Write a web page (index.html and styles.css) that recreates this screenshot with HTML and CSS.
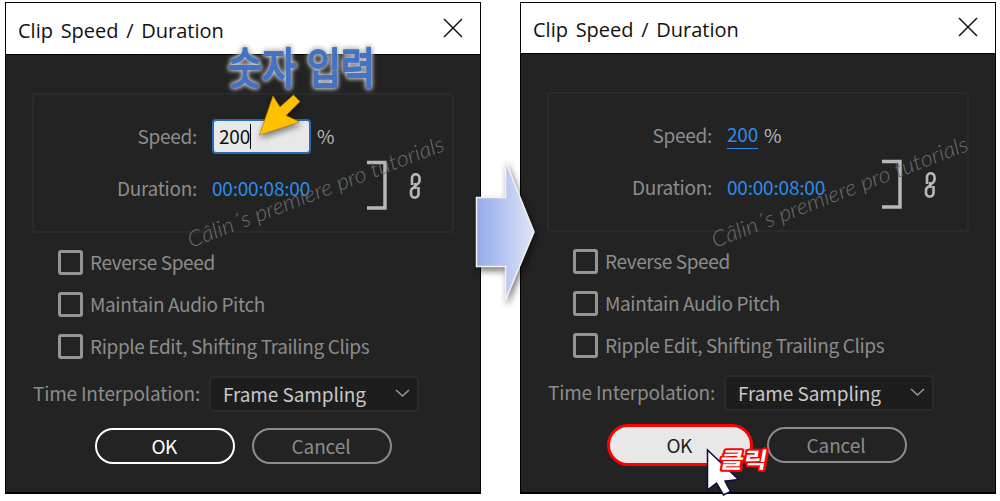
FILE: index.html
```
<!DOCTYPE html>
<html lang="en">
<head>
    <meta charset="UTF-8">
    <title>Clip Speed / Duration</title>
    <link rel="stylesheet" href="styles.css">
</head>
<body>
    <div class="stage">
        <div class="dialog">
            <div class="title-bar">
                <span class="title">Clip Speed / Duration</span>
                <svg class="close" width="20" height="20" viewBox="0 0 20 20"><path d="M1 1L19 19M19 1L1 19"/></svg>
            </div>
            <div class="group">
                <div class="fields">
                    <div class="row">
                        <span class="label">Speed:</span>
                        <span class="input">200<i class="caret"></i></span>
                        <span class="percent">%</span>
                    </div>
                    <div class="row">
                        <span class="label">Duration:</span>
                        <span class="value">00:00:08:00</span>
                    </div>
                </div>
                <svg class="link" width="56" height="52" viewBox="0 0 56 52">
                    <path class="bracket" d="M0 2.500H18V48H0"/>
                    <path class="chain" d="M45 25V18a3.750 3.750 0 0 1 7.500 0V21Q52.500 23 50.500 24L48.500 25.500V29"/>
                    <path class="chain" d="M51.500 27V34a3.750 3.750 0 0 1-7.500 0V31Q44 29 46 28L48 26.500V23"/>
                </svg>
            </div>
            <div class="checks">
                <div class="check"><span class="box"></span><span>Reverse Speed</span></div>
                <div class="check"><span class="box"></span><span>Maintain Audio Pitch</span></div>
                <div class="check"><span class="box"></span><span>Ripple Edit, Shifting Trailing Clips</span></div>
            </div>
            <div class="interpolation">
                <span class="label">Time Interpolation:</span>
                <div class="select">
                    <span>Frame Sampling</span>
                    <svg width="15" height="8" viewBox="0 0 15 8"><path d="M1 1L7.500 7L14 1"/></svg>
                </div>
            </div>
            <div class="buttons">
                <div class="btn ok">OK</div>
                <div class="btn">Cancel</div>
            </div>
        </div>

        <div class="dialog second">
            <div class="title-bar">
                <span class="title">Clip Speed / Duration</span>
                <svg class="close" width="20" height="20" viewBox="0 0 20 20"><path d="M1 1L19 19M19 1L1 19"/></svg>
            </div>
            <div class="group">
                <div class="fields">
                    <div class="row">
                        <span class="label">Speed:</span>
                        <span class="value underlined">200</span>
                        <span class="percent">%</span>
                    </div>
                    <div class="row">
                        <span class="label">Duration:</span>
                        <span class="value">00:00:08:00</span>
                    </div>
                </div>
                <svg class="link" width="56" height="52" viewBox="0 0 56 52">
                    <path class="bracket" d="M0 2.500H18V48H0"/>
                    <path class="chain" d="M45 25V18a3.750 3.750 0 0 1 7.500 0V21Q52.500 23 50.500 24L48.500 25.500V29"/>
                    <path class="chain" d="M51.500 27V34a3.750 3.750 0 0 1-7.500 0V31Q44 29 46 28L48 26.500V23"/>
                </svg>
            </div>
            <div class="checks">
                <div class="check"><span class="box"></span><span>Reverse Speed</span></div>
                <div class="check"><span class="box"></span><span>Maintain Audio Pitch</span></div>
                <div class="check"><span class="box"></span><span>Ripple Edit, Shifting Trailing Clips</span></div>
            </div>
            <div class="interpolation">
                <span class="label">Time Interpolation:</span>
                <div class="select">
                    <span>Frame Sampling</span>
                    <svg width="15" height="8" viewBox="0 0 15 8"><path d="M1 1L7.500 7L14 1"/></svg>
                </div>
            </div>
            <div class="buttons">
                <div class="btn ok pressed">OK</div>
                <div class="btn">Cancel</div>
            </div>
        </div>

        <!-- tutorial marks on top of both dialogs -->
        <svg class="marks" width="1000" height="501" viewBox="0 0 1000 501">
            <defs>
                <linearGradient id="blue" x1="0" x2="1">
                    <stop offset="0" stop-color="#93aaec"/>
                    <stop offset="1" stop-color="#dfe5f7"/>
                </linearGradient>
            </defs>
            <text class="watermark" transform="translate(191 248) rotate(-21)" textLength="273" lengthAdjust="spacingAndGlyphs">Câlin´s premiere pro tutorials</text>
            <text class="watermark" transform="translate(715 248) rotate(-21)" textLength="273" lengthAdjust="spacingAndGlyphs">Câlin´s premiere pro tutorials</text>
            <path class="next" d="M476.500 197.500H505.500V161L534 232L505.500 300V266.500H476.500Z"/>
            <text class="note" lang="ko" x="228" y="84" textLength="147" lengthAdjust="spacingAndGlyphs">숫자 입력</text>
            <path class="pointer" d="M259.500 135L273 96L280 107L293.500 95L300 101.500L286 115.500L299.500 122Z"/>
            <path class="cursor" d="M707.500 450V490L716.500 483L723.500 495L730.500 491.500L725 481L738.500 479.500Z"/>
            <text class="click" lang="ko" transform="translate(719 468) skewX(-10)" textLength="47" lengthAdjust="spacingAndGlyphs">클릭</text>
        </svg>
    </div>
</body>
</html>
```
FILE: styles.css
```
* {
    box-sizing: border-box;
}
body {
    margin: 0;
    background: #fff;
    font-family: "Noto Sans CJK KR", sans-serif;
    font-size: 19px;
    line-height: 24px;
    letter-spacing: -0.38px;
    color: #8c8c8c;
    overflow: hidden;
}
.stage {
    position: relative;
    display: flex;
    gap: 39px;
    width: 1000px;
    height: 501px;
    padding: 2px 0 0 5px;
    white-space: nowrap;
}
.dialog {
    width: 476px;
    height: 492px;
    background: #232323;
    border: 1px solid #000;
    border-bottom-width: 2px;
}
.title-bar {
    display: flex;
    justify-content: space-between;
    height: 52px;
    padding: 15px 17px 0 12px;
    background: #fff;
    border-bottom: 1px solid #000;
    color: #111;
}
.title {
    font-family: "Open Sans", sans-serif;
    font-size: 20px;
    line-height: 26px;
    letter-spacing: 0;
    word-spacing: 2.500px;
}
.close {
    fill: none;
    stroke: #111;
    stroke-width: 1.5;
}
.group {
    display: flex;
    width: 422px;
    height: 140px;
    margin: 38px 0 0 26px;
    border: 2px solid #2b2b2b;
    border-radius: 4px;
}
.fields {
    display: flex;
    flex-direction: column;
    gap: 17px;
    width: 333px;
    padding-top: 24px;
}
.row {
    display: flex;
    align-items: center;
    height: 35px;
}
.label {
    width: 163px;
    margin-right: 15px;
    padding-bottom: 2px;
    text-align: right;
    letter-spacing: -0.3px;
}
.input {
    display: flex;
    align-items: center;
    width: 99px;
    height: 35px;
    padding: 0 0 1px 5px;
    background: #e8e8e8;
    border: 2px solid #2a6ab5;
    border-radius: 4px;
    color: #111;
    letter-spacing: -0.2px;
}
.caret {
    width: 1px;
    height: 25px;
    background: #000;
}
.percent {
    margin-left: 6px;
    padding-bottom: 2px;
    color: #b8b8b8;
}
.value {
    padding-bottom: 2px;
    color: #2d8ceb;
    letter-spacing: -0.2px;
}
.underlined {
    height: 27px;
    border-bottom: 1px solid #2d8ceb;
}
.link {
    margin-top: 65px;
    fill: none;
}
.bracket {
    stroke: #b8b8b8;
    stroke-width: 3.5;
}
.chain {
    stroke: #b8b8b8;
    stroke-width: 2.6;
}
.checks {
    display: flex;
    flex-direction: column;
    gap: 17px;
    margin: 17px 0 0 52px;
}
.check {
    display: flex;
    align-items: center;
    gap: 7px;
    height: 25px;
}
.check span:last-child {
    padding-bottom: 2px;
}
.box {
    width: 25px;
    height: 25px;
    border: 3px solid #959595;
    border-radius: 3px;
}
.interpolation {
    display: flex;
    align-items: center;
    height: 36px;
    margin: 17px 0 0 26px;
}
.interpolation .label {
    width: 168px;
    margin-right: 9px;
    letter-spacing: -0.2px;
}
.select {
    display: flex;
    justify-content: space-between;
    align-items: center;
    width: 210px;
    height: 36px;
    padding: 0 7px 1px 12px;
    background: #1d1d1d;
    border: 2px solid #2b2b2b;
    border-radius: 4px;
    color: #c8c8c8;
    letter-spacing: -0.1px;
}
.select svg {
    margin-top: -2px;
    fill: none;
    stroke: #999;
    stroke-width: 1.5;
}
.buttons {
    display: flex;
    gap: 17px;
    margin: 16px 0 0 89px;
}
.btn {
    width: 140px;
    height: 36px;
    padding-right: 2px;
    border: 2px solid #8c8c8c;
    border-radius: 18px;
    text-align: center;
    line-height: 32px;
    letter-spacing: -0.1px;
}
.ok {
    border-color: #fff;
    color: #fff;
    letter-spacing: -0.6px;
}
.pressed {
    background: #e8e8e8;
    border-color: #e8e8e8;
    color: #222;
    box-shadow: 0 0 0 3px #f00;
}
.second .title-bar {
    height: 51px;
    padding-top: 14px;
}
.marks {
    position: absolute;
    left: 0;
    top: 0;
    letter-spacing: 0;
}
.watermark {
    font: italic 300 22px Lato, sans-serif;
    fill: #6c6c6c;
}
.next {
    fill: url(#blue);
    stroke: #f5f1ef;
    stroke-width: 1.5;
    filter: drop-shadow(2px 4px 3px rgba(0, 0, 0, 0.5));
}
.note {
    font: 400 43px "Noto Sans CJK KR", sans-serif;
    fill: #4472c4;
    stroke: #4472c4;
    stroke-width: 2;
    stroke-linejoin: round;
    filter: drop-shadow(0 0 2px #ccc) drop-shadow(0 0 2px #aaa);
}
.pointer {
    fill: #ffc000;
    stroke: #b98200;
    stroke-width: 0.7;
    filter: drop-shadow(1px 3px 3px rgba(0, 0, 0, 0.5));
}
.cursor {
    fill: #fff;
    stroke: #0b0b45;
    stroke-width: 1.5;
}
.click {
    font: 700 22px "Noto Sans CJK KR", sans-serif;
    fill: #fff;
    stroke: #f00;
    stroke-width: 4;
    stroke-linejoin: round;
    paint-order: stroke;
}
```
